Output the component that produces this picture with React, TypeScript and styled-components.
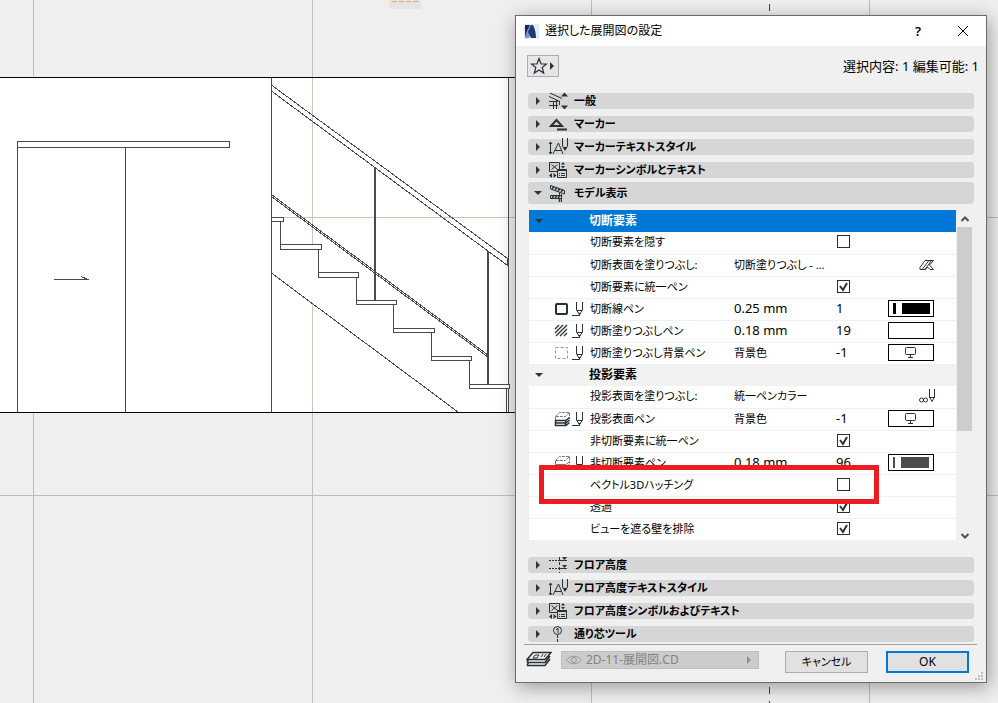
import React, { useState } from "react";
import styled, { createGlobalStyle, css } from "styled-components";

const GlobalStyle = createGlobalStyle`
  * { box-sizing: border-box; }
  body {
    margin: 0;
    background: #efefef;
    color: #000;
    font-family: "Noto Sans", "Noto Sans CJK JP", sans-serif;
    font-size: 12px;
    line-height: 16px;
    font-feature-settings: "palt";
  }
  button, input { font: inherit; color: inherit; margin: 0; font-feature-settings: inherit; }
`;

const Desktop = styled.main`
  position: relative;
  display: flex;
  justify-content: flex-end;
  align-items: flex-start;
  min-height: 100vh;
  padding: 15px 11px 20px;
  overflow: hidden;
`;

const Canvas = styled.svg`
  position: absolute;
  inset: 0;
  width: 100%;
  height: 100%;
`;

const Dialog = styled.section`
  position: relative;
  width: min(472px, 100%);
  border: 1px solid #6b6b6b;
  background: #f0f0f0;
  box-shadow: 2px 4px 18px rgba(0, 0, 0, 0.36);
`;

const TitleBar = styled.header`
  display: flex;
  align-items: center;
  height: 30px;
  padding: 0 8px;
  background: #fff;
`;

const Title = styled.h1`
  flex: 1;
  margin: 0 0 0 6px;
  font-size: 12px;
  font-weight: 400;
`;

const TitleButton = styled.button`
  display: grid;
  place-items: center;
  width: 30px;
  height: 28px;
  margin-left: 15px;
  padding: 0;
  border: 0;
  background: none;
  font-size: 13px;
  font-weight: 600;
`;

const Toolbar = styled.div`
  display: flex;
  align-items: center;
  justify-content: space-between;
  padding: 9px 7px 16px 11px;
`;

const FavoriteButton = styled.button`
  display: flex;
  align-items: center;
  justify-content: center;
  width: 32px;
  height: 22px;
  padding: 0;
  border: 1px solid #adadad;
  background: #e6e6e6;
`;

const SelectionInfo = styled.p`
  margin: 0;
  font-size: 13px;
`;

const Sections = styled.div`
  display: grid;
  gap: 7px;
  padding: 0 12px;
`;

const SectionBar = styled.button<{ $open?: boolean }>`
  display: flex;
  align-items: center;
  width: 100%;
  height: 16px;
  padding: 0 6px;
  border: 0;
  border-radius: 3px;
  background: #d6d6d6;
  font-size: 11px;
  font-weight: 700;
  text-align: left;
  white-space: nowrap;
  ${(p) => p.$open && css`
    height: 22px;
    margin-top: -3px;
  `}
`;

const SectionIcon = styled.span`
  display: flex;
  flex: none;
  width: 20px;
  height: 18px;
  margin: 0 6px;
`;

const ListFrame = styled.div`
  position: relative;
  display: flex;
  margin: 6px 14px 16px 13px;
`;

const PropertyTable = styled.table`
  flex: 1;
  min-width: 0;
  height: 330px;
  border-collapse: collapse;
  table-layout: fixed;
  background: #fff;
`;

const Row = styled.tr<{ $kind: "item" | "group" | "active" }>`
  height: 22px;
  background: ${(p) => (p.$kind === "active" ? "#0078d7" : p.$kind === "group" ? "#f2f2f2" : "#fff")};
  color: ${(p) => (p.$kind === "active" ? "#fff" : "#000")};
`;

const Cell = styled.td`
  height: 22px;
  padding: 0 0 1px 1px;
  border-bottom: 1px solid #f0f0f0;
  font-size: 11px;
  line-height: 18px;
  vertical-align: middle;
  white-space: nowrap;
  overflow: hidden;
`;

const LatinCell = styled(Cell)`
  padding-bottom: 2px;
  font-size: 13px;
`;

const GroupCell = styled.th`
  height: 22px;
  padding: 0;
  line-height: 18px;
  font-weight: 700;
  text-align: left;
`;

const GroupToggle = styled.button`
  display: flex;
  padding: 0 0 0 6px;
  border: 0;
  background: none;
`;

const CellIcons = styled.span`
  display: flex;
  align-items: center;
  gap: 2px;
  padding-left: 24px;
`;

const Check = styled.input`
  appearance: none;
  display: block;
  width: 13px;
  height: 13px;
  margin-left: 1px;
  border: 1px solid #263238;
  background: #fff;
  &:checked {
    background: #fff url("data:image/svg+xml,%3Csvg xmlns='http://www.w3.org/2000/svg' width='11' height='11'%3E%3Cpath d='M2 5l3 4L9 2' fill='none' stroke='%23263238' stroke-width='2'/%3E%3C/svg%3E") center no-repeat;
  }
`;

const Swatch = styled.button`
  display: flex;
  align-items: center;
  justify-content: center;
  gap: 6px;
  width: 46px;
  height: 17px;
  padding: 0;
  border: 1px solid #000;
  background: #fff;
`;

const PenTick = styled.span<{ $color: string; $width: number }>`
  width: ${(p) => p.$width}px;
  height: 11px;
  background: ${(p) => p.$color};
`;

const PenFill = styled.span<{ $color: string }>`
  width: 28px;
  height: 11px;
  background: ${(p) => p.$color};
`;

const PlainButton = styled.button`
  display: flex;
  margin-left: 31px;
  padding: 0;
  border: 0;
  background: none;
`;

const ScrollTrack = styled.div`
  display: flex;
  flex-direction: column;
  align-items: center;
  width: 15px;
  margin: 0 0 -4px 1px;
`;

const ScrollButton = styled.button`
  display: grid;
  place-items: center;
  width: 15px;
  height: 17px;
  padding: 0;
  border: 0;
  background: none;
`;

const ScrollSpace = styled.div`
  flex: 1;
  width: 100%;
`;

const ScrollThumb = styled.div`
  width: 100%;
  height: 68%;
  background: #cdcdcd;
`;

const Highlight = styled.div`
  position: absolute;
  left: 10px;
  top: 255px;
  width: 340px;
  height: 39px;
  border: 5px solid #ed1c24;
  pointer-events: none;
`;

const Footer = styled.footer`
  display: flex;
  align-items: flex-start;
  margin: 2px 9px 0 8px;
  padding: 6px 8px 9px 2px;
  border-top: 1px solid #a0a0a0;
`;

const LayerButton = styled.button`
  display: flex;
  align-items: center;
  flex: 0 1 198px;
  gap: 4px;
  height: 18px;
  margin: 0 26px 0 9px;
  padding: 0 5px 0 4px;
  border: 1px solid #bfbfbf;
  background: #cccccc;
  color: #838383;
  white-space: nowrap;
`;

const LayerName = styled.span`
  flex: 1;
  text-align: left;
  font-size: 12px;
`;

const ActionButton = styled.button<{ $primary?: boolean }>`
  width: 83px;
  height: 22px;
  padding: 0;
  border: ${(p) => (p.$primary ? "2px solid #0078d7" : "1px solid #adadad")};
  background: #e1e1e1;
  font-size: ${(p) => (p.$primary ? 12 : 11)}px;
  line-height: 16px;
  & + & { margin-left: 18px; }
`;

const Grip = styled.svg`
  position: absolute;
  right: 3px;
  bottom: 2px;
`;

const ink = "#263238";

function Arrow({ down = false, color = "#333" }: { down?: boolean; color?: string }) {
  return (
    <svg width="8" height="8" aria-hidden="true">
      <path d={down ? "M0 2h8L4 6z" : "M2 0v8l4-4z"} fill={color} />
    </svg>
  );
}

type IconName = "general" | "marker" | "textStyle" | "symbol" | "model" | "story" | "grid";

const sectionArt: Record<IconName, React.ReactNode> = {
  general: (
    <g>
      <path d="M1 4.500L12 9.500M2 1L14 6.500M1 9.500h9M1 13.500h9M5.500 9v8M8.500 8v9M11.500 9v4" />
      <path d="M13 4.500l3.500-4 3.500 4zM13 13.500l3.500 4 3.500-4z" fill={ink} stroke="none" />
    </g>
  ),
  marker: (
    <g>
      <path d="M3 11L8.500 5L14 11z" strokeWidth="2" />
      <path d="M9 14.500h10" strokeWidth="2" />
    </g>
  ),
  textStyle: (
    <g>
      <path d="M2.500 4v12M1 6l1.500-2L4 6M1 14l1.500 2L4 14" />
      <path d="M5 16L10.500 5L15 16M7 12.500h6M14.500 0v8l2.500 4 2.500-4V0" />
      <path d="M15 9h4l-2 4z" fill={ink} stroke="none" />
    </g>
  ),
  symbol: (
    <g>
      <path d="M1.500 1.500h10v9h-10zM3.500 3.500l6 5M9.500 3.500l-6 5" />
      <path d="M9.500 8.500h9v8h-9z" fill="#d6d6d6" />
      <path d="M9 8h10v2H9z" fill={ink} stroke="none" />
      <path d="M11 12.500h1M13 12.500h4M11 14.500h1M13 14.500h4" />
      <path d="M13 3.500l2-2.500 2 2.500zM13 5h4l-2 2.500zM4 12v5l-3-2.500zM5.500 12v5l3-2.500z" fill={ink} stroke="none" />
    </g>
  ),
  model: (
    <g>
      <path d="M2.500 1.500L16.500 6.500v3.500L2.500 5zM2.500 11.500h11v3h-11zM13.500 10v8M16.500 10v-3M11.500 8.500v3" />
      <path d="M4 5l2-2.500M7 6l2-2.500M10 7l2-2.500M13 8l2-2.500M4 14l2-2.500M7 14l2-2.500M10 14l2-2.500M11.500 15v3" strokeWidth="1.500" />
    </g>
  ),
  story: (
    <g>
      <path d="M1 4.500h9M1 12.500h9" strokeDasharray="2 1" />
      <path d="M10 4.500h9M10 12.500h9" />
      <path d="M11.500 1v16" strokeDasharray="3 2" />
      <path d="M14 1h5l-2.500 3zM14 9h5l-2.500 3z" fill={ink} stroke="none" />
    </g>
  ),
  grid: (
    <g>
      <circle cx="9.500" cy="5.500" r="4" />
      <path d="M8 5l2-2v5.500" />
      <path d="M9.500 10v7" strokeDasharray="3 1" />
    </g>
  ),
};

function SectionGlyph({ name }: { name: IconName }) {
  return (
    <SectionIcon>
      <svg width="20" height="18" fill="none" stroke={ink} aria-hidden="true">
        {sectionArt[name]}
      </svg>
    </SectionIcon>
  );
}

function Section({ icon, label, open }: { icon: IconName; label: string; open?: boolean }) {
  return (
    <SectionBar type="button" $open={open} aria-expanded={!!open}>
      <Arrow down={open} />
      <SectionGlyph name={icon} />
      {label}
    </SectionBar>
  );
}

type RowArt = "outline" | "hatch" | "dashed" | "surface" | "surfaceLight";

const rowArt: Record<RowArt, React.ReactNode> = {
  outline: <rect x="2" y="3" width="11" height="10" rx="1" strokeWidth="2" />,
  hatch: <path d="M1 6l4-4M1 10l8-8M2 13L13 2M6 13l7-7M10 13l3-3" strokeWidth="1.300" />,
  dashed: <rect x="1.500" y="2.500" width="12" height="11" stroke="#999" strokeDasharray="3 2" />,
  surface: (
    <g>
      <path d="M1.500 5.500l4-4h10l-4 4zM15.500 2v6M1.500 6v3" stroke="#777" strokeDasharray="3 1" />
      <path d="M1.500 9.500h10v5h-10zM1.500 12h10M12 9.500l3.500-3M12 12l3.500-3M12 14.500l3.500-3" strokeWidth="1.500" />
    </g>
  ),
  surfaceLight: (
    <g stroke="#777">
      <path d="M1.500 5.500l4-4h10l-4 4zM15.500 2v6M1.500 6v3" strokeDasharray="3 1" />
      <path d="M1.500 9.500h10v5h-10zM1.500 12h10M12 9.500l3.500-3M12 12l3.500-3" />
    </g>
  ),
};

function RowGlyph({ name }: { name: RowArt }) {
  return (
    <CellIcons>
      <svg width="16" height="16" fill="none" stroke={ink} aria-hidden="true">
        {rowArt[name]}
      </svg>
      <svg width="12" height="16" fill="none" stroke={ink} aria-hidden="true">
        <path d="M4.500 1v8l3 4.500 3-4.500V1M5 9.500h5M0 14.500h8" />
        <path d="M6 12h3l-1.500 2.500z" fill={ink} stroke="none" />
      </svg>
    </CellIcons>
  );
}

function MonitorGlyph() {
  return (
    <svg width="12" height="11" fill="none" stroke={ink} aria-hidden="true">
      <rect x="0.500" y="0.500" width="10" height="7" rx="1" />
      <path d="M3 10.500h5M5.500 8v2" />
    </svg>
  );
}

type Tail = "fill" | "unipen" | "monitor" | "blank" | "black" | "grey";

interface Property {
  label: string;
  icon?: RowArt;
  value?: string;
  latin?: boolean;
  index?: string;
  checked?: boolean;
  tail?: Tail;
}

function TailControl({ tail, label }: { tail: Tail; label: string }) {
  if (tail === "fill") {
    return (
      <PlainButton type="button" aria-label={label}>
        <svg width="16" height="12" fill="none" stroke={ink} aria-hidden="true">
          <path d="M1 8.500L6 1.500H14.500L10.500 6l4 4.500H11L8.500 8l-2 2.500H1zM3.500 10l6-8M6 10.500l6.500-9" />
        </svg>
      </PlainButton>
    );
  }
  if (tail === "unipen") {
    return (
      <PlainButton type="button" aria-label={label}>
        <svg width="17" height="14" fill="none" stroke={ink} aria-hidden="true">
          <path d="M10.500 0v8l2.500 4.500L15.500 8V0M10 8.500h6" />
          <circle cx="2.500" cy="11" r="2" />
          <circle cx="6.500" cy="11" r="2" />
        </svg>
      </PlainButton>
    );
  }
  const color = tail === "grey" ? "#4d4d4d" : "#000";
  return (
    <Swatch type="button" aria-label={label}>
      {tail === "monitor" && <MonitorGlyph />}
      {(tail === "black" || tail === "grey") && (
        <>
          <PenTick $color={color} $width={tail === "grey" ? 2 : 3} />
          <PenFill $color={color} />
        </>
      )}
    </Swatch>
  );
}

function PropertyRow({ item, id }: { item: Property; id: string }) {
  const [checked, setChecked] = useState(!!item.checked);
  const isCheck = item.checked !== undefined;
  const ValueCell = item.latin ? LatinCell : Cell;
  return (
    <Row $kind="item">
      <Cell>{item.icon && <RowGlyph name={item.icon} />}</Cell>
      <Cell>{isCheck ? <label htmlFor={id}>{item.label}</label> : item.label}</Cell>
      <ValueCell>{item.value}</ValueCell>
      <LatinCell>
        {isCheck ? (
          <Check id={id} type="checkbox" checked={checked} onChange={() => setChecked(!checked)} />
        ) : (
          item.index
        )}
      </LatinCell>
      <Cell>{item.tail && <TailControl tail={item.tail} label={item.label} />}</Cell>
    </Row>
  );
}

function GroupRow({ label, active }: { label: string; active?: boolean }) {
  return (
    <Row $kind={active ? "active" : "group"}>
      <GroupCell>
        <GroupToggle type="button" aria-label={label} aria-expanded="true">
          <Arrow down />
        </GroupToggle>
      </GroupCell>
      <GroupCell colSpan={4} scope="rowgroup">
        {label}
      </GroupCell>
    </Row>
  );
}

const cutItems: Property[] = [
  { label: "切断要素を隠す", checked: false },
  { label: "切断表面を塗りつぶし:", value: "切断塗りつぶし - ...", tail: "fill" },
  { label: "切断要素に統一ペン", checked: true },
  { label: "切断線ペン", icon: "outline", value: "0.25 mm", latin: true, index: "1", tail: "black" },
  { label: "切断塗りつぶしペン", icon: "hatch", value: "0.18 mm", latin: true, index: "19", tail: "blank" },
  { label: "切断塗りつぶし背景ペン", icon: "dashed", value: "背景色", index: "-1", tail: "monitor" },
];

const projectedItems: Property[] = [
  { label: "投影表面を塗りつぶし:", value: "統一ペンカラー", tail: "unipen" },
  { label: "投影表面ペン", icon: "surface", value: "背景色", index: "-1", tail: "monitor" },
  { label: "非切断要素に統一ペン", checked: true },
  { label: "非切断要素ペン", icon: "surfaceLight", value: "0.18 mm", latin: true, index: "96", tail: "grey" },
  { label: "ベクトル3Dハッチング", checked: false },
  { label: "透過", checked: true },
  { label: "ビューを遮る壁を排除", checked: true },
];

const treads = [
  [280, 244, 41, 5],
  [318, 272, 40, 5],
  [356, 300, 40, 4],
  [393, 328, 41, 4],
  [431, 356, 40, 4],
  [469, 384, 40, 4],
];

function ElevationDrawing() {
  return (
    <Canvas aria-hidden="true" shapeRendering="crispEdges" fill="none">
      <path d="M33.500 0V703M312.500 0V703M591.500 0V703M869.500 0V703M0 217.500H998M0 495.500H998" stroke="#bfbfb4" />
      <rect x="0" y="78" width="508" height="334" fill="#fff" />
      <path d="M312.500 78V244M312.500 303V412M284 217.500H508" stroke="#c8c5b6" />
      <path d="M0 77.500H516M0 412.500H516" stroke="#000" />
      <g stroke="#4a4a4a">
        <path d="M17.500 412V141.500H229.500V147.500H17.500M125.500 148V412M54 279.500H89M81 276.500L88 279.500" />
        <path d="M271.500 78V412M508.500 78V412M506.500 388V412" />
        <path d="M272 85.500L507.500 258.500V265.500L272 91.500" />
        <path d="M272 195L488 355M272 197L488 357M272 273.500L458 412" />
        <path d="M375 167V300M488 251V384" strokeWidth="2" />
        <path d="M272 217.500H283.500V221.500H272M280.500 222V244M318.500 249V272M356.500 277V300M393.500 304V328M431.500 332V356M469.500 360V384" />
        {treads.map(([x, y, w, h]) => (
          <rect key={x} x={x + 0.5} y={y + 0.5} width={w} height={h} fill="#fff" />
        ))}
      </g>
      <path d="M769.500 4V11M769.500 687V694M769.500 701V703" stroke="#e00000" />
      <path d="M389 0h32v5q0 4-4 4h-24q-4 0-4-4z" fill="#e4e4e4" />
      <path d="M392 1.500H418" stroke="#f4a460" strokeDasharray="5 2" />
    </Canvas>
  );
}

export default function App() {
  return (
    <>
      <GlobalStyle />
      <Desktop>
        <ElevationDrawing />
        <Dialog role="dialog" aria-labelledby="dialog-title">
          <TitleBar>
            <svg width="15" height="15" aria-hidden="true">
              <rect width="15" height="15" fill="#e8eaf2" />
              <path d="M1 1h5L2 12H1z" fill="#16295c" />
              <path d="M1 14C2 8 4 3 7 1h2L5 14z" fill="#7b93c4" />
              <path d="M7 1h2c2 4 3 8 3 13H7L4 8z" fill="#1d3a7a" />
            </svg>
            <Title id="dialog-title">選択した展開図の設定</Title>
            <TitleButton type="button" aria-label="ヘルプ">?</TitleButton>
            <TitleButton type="button" aria-label="閉じる">
              <svg width="10" height="10" stroke="#000" aria-hidden="true">
                <path d="M0 0l10 10M10 0l-10 10" />
              </svg>
            </TitleButton>
          </TitleBar>

          <Toolbar>
            <FavoriteButton type="button" aria-label="お気に入り">
              <svg width="18" height="18" fill="none" stroke={ink} strokeWidth="1.200" aria-hidden="true">
                <path d="M9 1.500l2 5.300 5.500.2-4.300 3.500 1.500 5.500L9 12.900 4.300 16l1.500-5.500L1.500 7l5.500-.2z" />
              </svg>
              <Arrow />
            </FavoriteButton>
            <SelectionInfo>選択内容: 1 編集可能: 1</SelectionInfo>
          </Toolbar>

          <Sections>
            <Section icon="general" label="一般" />
            <Section icon="marker" label="マーカー" />
            <Section icon="textStyle" label="マーカーテキストスタイル" />
            <Section icon="symbol" label="マーカーシンボルとテキスト" />
            <Section icon="model" label="モデル表示" open />
          </Sections>

          <ListFrame>
            <PropertyTable>
              <colgroup>
                <col width="60" />
                <col width="144" />
                <col width="102" />
                <col width="52" />
                <col />
              </colgroup>
              <tbody>
                <GroupRow label="切断要素" active />
                {cutItems.map((item, i) => (
                  <PropertyRow key={item.label} id={`cut-${i}`} item={item} />
                ))}
                <GroupRow label="投影要素" />
                {projectedItems.map((item, i) => (
                  <PropertyRow key={item.label} id={`projected-${i}`} item={item} />
                ))}
              </tbody>
            </PropertyTable>
            <ScrollTrack>
              <ScrollButton type="button" aria-label="上へ">
                <svg width="8" height="6" fill="none" stroke="#505050" strokeWidth="2" aria-hidden="true">
                  <path d="M0.500 5L4 1.500L7.500 5" />
                </svg>
              </ScrollButton>
              <ScrollSpace>
                <ScrollThumb />
              </ScrollSpace>
              <ScrollButton type="button" aria-label="下へ">
                <svg width="8" height="6" fill="none" stroke="#505050" strokeWidth="2" aria-hidden="true">
                  <path d="M0.500 1L4 4.500L7.500 1" />
                </svg>
              </ScrollButton>
            </ScrollTrack>
            <Highlight />
          </ListFrame>

          <Sections>
            <Section icon="story" label="フロア高度" />
            <Section icon="textStyle" label="フロア高度テキストスタイル" />
            <Section icon="symbol" label="フロア高度シンボルおよびテキスト" />
            <Section icon="grid" label="通り芯ツール" />
          </Sections>

          <Footer>
            <svg width="26" height="18" fill="none" stroke={ink} aria-hidden="true">
              <path d="M7 1.500H25L19 8.500H1zM24 5L19 11.500H1M24 8L19 14.500H1M2.500 8.500L1 11.500M2.500 11.500L1 14.500" strokeWidth="1.500" />
              <path d="M9 4h4l-2 3H7zM15 6l2-3M18 6l2-3" />
            </svg>
            <LayerButton type="button" disabled>
              <svg width="16" height="10" fill="none" stroke="#999" aria-hidden="true">
                <path d="M0.500 5C4 0 12 0 15.500 5C12 10 4 10 0.500 5z" />
                <circle cx="8" cy="5" r="2.500" />
              </svg>
              <LayerName>2D-11-展開図.CD</LayerName>
              <Arrow color="#909090" />
            </LayerButton>
            <ActionButton type="button">キャンセル</ActionButton>
            <ActionButton type="button" $primary>OK</ActionButton>
          </Footer>
          <Grip width="8" height="8" fill="#bfbfbf" aria-hidden="true">
            <path d="M6 0h2v2h-2zM3 3h2v2h-2zM6 3h2v2h-2zM0 6h2v2h-2zM3 6h2v2h-2zM6 6h2v2h-2z" />
          </Grip>
        </Dialog>
      </Desktop>
    </>
  );
}
